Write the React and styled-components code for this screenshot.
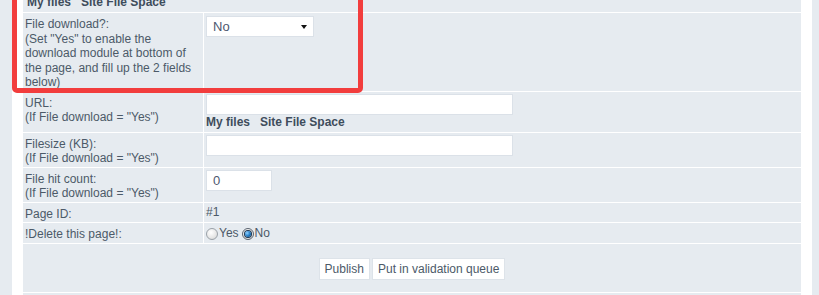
import React from 'react';
import styled, { createGlobalStyle } from 'styled-components';

const GlobalStyle = createGlobalStyle`
  html, body {
    margin: 0;
    padding: 0;
    background: #fff;
    overflow: hidden;
  }
  body {
    font-family: 'Liberation Sans', Arial, sans-serif;
    font-size: 12px;
    color: #4c5a68;
  }
`;

const Page = styled.div`
  position: relative;
  height: 295px;
  overflow: hidden;
  background: #e6ebf0;
  padding: 0 7px 0 12px;
`;

const Panel = styled.div`
  background: #fff;
  height: 100%;
  padding: 0 11px;
`;

const FormGrid = styled.div`
  display: grid;
  grid-template-columns: 180px 1fr;
  gap: 1px;
  background: #fff;
`;

const Cell = styled.div`
  background: #e6ebf0;
  padding: 2px;
  line-height: 15px;
`;

const LabelCell = styled(Cell)`
  padding: 4px 2px 1px;
  line-height: 14.5px;
`;

const FullCell = styled(Cell)`
  grid-column: 1 / -1;
  height: ${(p) => p.$height}px;
  box-sizing: border-box;
  display: flex;
  align-items: flex-end;
  overflow: hidden;
`;

const ActionCell = styled(Cell)`
  grid-column: 1 / -1;
  display: flex;
  justify-content: center;
  gap: 2px;
  padding: 14px 2px 12px;
`;

const Links = styled.div`
  display: flex;
  gap: 10px;
  padding-left: ${(p) => p.$indent || 0}px;
  font-weight: bold;
  color: #3e4d5c;
  line-height: 15px;
`;

const TextInput = styled.div`
  box-sizing: border-box;
  width: ${(p) => p.$width}px;
  height: 21px;
  background: #fff;
  border: 1px solid #dbe1e8;
  padding: 0 6px;
  display: flex;
  align-items: center;
  color: #4d5870;
  font-size: 13px;
`;

const SelectBox = styled(TextInput)`
  justify-content: space-between;
  margin-top: 1px;
`;

const Caret = styled.span`
  width: 0;
  height: 0;
  border-left: 3.5px solid transparent;
  border-right: 3.5px solid transparent;
  border-top: 4px solid #111;
`;

const RadioRow = styled.div`
  display: flex;
  align-items: center;
  height: 16px;
`;

const Radio = styled.span`
  box-sizing: border-box;
  width: 12px;
  height: 12px;
  border-radius: 50%;
  border: 1px solid #9aa1a8;
  background: radial-gradient(circle at 40% 35%, #ffffff 0%, #e6e6e6 60%, #cfcfcf 100%);
  display: inline-flex;
  align-items: center;
  justify-content: center;
  margin: 1px 1px 0 0;
  &::after {
    content: '';
    display: ${(p) => (p.$checked ? 'block' : 'none')};
    width: 6px;
    height: 6px;
    border-radius: 50%;
    background: radial-gradient(circle at 35% 35%, #8fd0ff 0%, #1e78c2 55%, #0b3c6b 100%);
    box-shadow: 0 0 0 1px #1c3550;
  }
  ${(p) => p.$checked && 'border-color: #5b6470;'}
`;

const RadioLabel = styled.span`
  margin-right: 3px;
`;

const Button = styled.button`
  font-family: 'Liberation Sans', Arial, sans-serif;
  font-size: 12px;
  color: #4c5a68;
  height: 22px;
  padding: 0 5px;
  background: #fff;
  border: 1px solid #dde3e9;
  border-radius: 0;
  cursor: pointer;
`;

const Highlight = styled.div`
  position: absolute;
  left: 12px;
  top: -10px;
  width: 351px;
  height: 103px;
  box-sizing: border-box;
  border: 5px solid #f23d3d;
  border-radius: 5px;
  pointer-events: none;
`;

const App = () => (
  <>
    <GlobalStyle />
    <Page>
      <Panel>
        <FormGrid>
          <FullCell $height={12}>
            <Links $indent={2}>
              <span>My files</span>
              <span>Site File Space</span>
            </Links>
          </FullCell>

          <LabelCell>
            File download?:
            <br />
            (Set "Yes" to enable the download module at bottom of the page, and fill up the 2 fields below)
          </LabelCell>
          <Cell>
            <SelectBox $width={108}>
              No
              <Caret />
            </SelectBox>
          </Cell>

          <LabelCell>
            URL:
            <br />
            (If File download = "Yes")
          </LabelCell>
          <Cell>
            <TextInput $width={307} />
            <Links>
              <span>My files</span>
              <span>Site File Space</span>
            </Links>
          </Cell>

          <LabelCell>
            Filesize (KB):
            <br />
            (If File download = "Yes")
          </LabelCell>
          <Cell>
            <TextInput $width={307} />
          </Cell>

          <LabelCell>
            File hit count:
            <br />
            (If File download = "Yes")
          </LabelCell>
          <Cell>
            <TextInput $width={66}>0</TextInput>
          </Cell>

          <LabelCell>Page ID:</LabelCell>
          <Cell>#1</Cell>

          <LabelCell>!Delete this page!:</LabelCell>
          <Cell>
            <RadioRow>
              <Radio />
              <RadioLabel>Yes</RadioLabel>
              <Radio $checked />
              <RadioLabel>No</RadioLabel>
            </RadioRow>
          </Cell>

          <ActionCell>
            <Button type="button">Publish</Button>
            <Button type="button">Put in validation queue</Button>
          </ActionCell>

          <FullCell $height={20} />
        </FormGrid>
      </Panel>
      <Highlight />
    </Page>
  </>
);

export default App;
